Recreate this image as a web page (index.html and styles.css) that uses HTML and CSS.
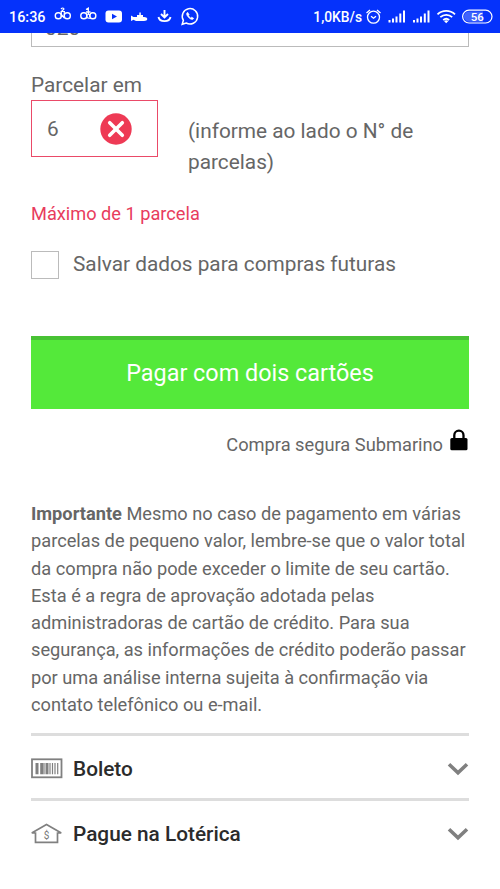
FILE: index.html
```html
<!DOCTYPE html>
<html lang="pt-BR">
<head>
<meta charset="utf-8">
<title>Pagamento</title>
<link rel="stylesheet" href="styles.css">
</head>
<body>
<header class="status">
  <span class="clock">16:36</span>
  <svg class="notices" width="150" height="33" viewBox="50 0 150 33" fill="none" stroke="#fff" stroke-width="1.4">
    <rect x="55.300" y="12.800" width="6" height="6" rx="2.800"/>
    <rect x="64.300" y="12.800" width="6" height="6" rx="2.800"/>
    <path d="M61.300 11.500V17M64.300 11.500V17M61.300 14.500l3 3.500M61 9q1.800-2 3 0l-2.500 2.500h3.500" stroke-width="1.200"/>
    <rect x="80.800" y="12.800" width="6" height="6" rx="2.800"/>
    <rect x="89.800" y="12.800" width="6" height="6" rx="2.800"/>
    <path d="M86.800 14v3.500l3 1M89.800 14v3M86 9.500l2.300-1.300V15M86 12h4.500" stroke-width="1.300"/>
    <rect x="105.500" y="10.500" width="16.500" height="12" rx="3" fill="#fff" stroke="none"/>
    <path d="m112 13.700 5 2.800-5 2.800z" fill="#0532fb" stroke="none"/>
    <path d="M131 15.500l2.500 1.500h3.500v-2h2.300v-2.500h1.500V15h2.200v2h1c2 0 3.300.7 3.300 2s-1.300 2-3.300 2h-8l-2.500-1.200-2.500 1.200z" fill="#fff" stroke="none"/>
    <path d="M164.500 10v6.500M161 14l3.500 3.500L168 14M158.500 17c1 5.500 11 5.500 12 0" stroke-width="1.900"/>
    <path d="m182.200 24.300 1.200-4A7.700 7.700 0 1 1 186.200 23z" stroke-width="1.500"/>
    <path d="M187.600 12.300c-1.500.8-1.300 2.800.8 4.900 2 2.200 4.400 3 5.300 1.200l-1.900-1.200-1.100.8c-1-.5-1.800-1.400-2.200-2.300l.6-1z" fill="#fff" stroke-width=".7"/>
  </svg>
  <span class="speed">1,0KB/s</span>
  <svg class="system" width="132" height="33" viewBox="364 0 132 33" fill="none" stroke="#fff" stroke-width="1.300">
    <circle cx="373.500" cy="17.200" r="6"/>
    <path d="m366.500 13 3.500-3M377 10l3.500 3M371 16.200l2.500 2 2.500-2"/>
    <path d="M389.500 20v2.500M393 18.500v4M396.500 16.500v6M400.300 13.500v9M404 10.500v12M414 20v2.500M417.500 18.500v4M421 16.500v6M424.800 13.500v9M428.500 10.500v12" stroke-width="2"/>
    <path d="M437.500 14.300c5-4.700 12.500-4.700 17.500 0M440.300 17.200c3.500-3.200 8.400-3.200 11.900 0M443.200 20c2-1.700 4-1.700 6 0" stroke-width="1.800"/>
    <path d="m444 21 2.200 2.300 2.200-2.300q-2.200-1.500-4.400 0z" fill="#fff" stroke="none"/>
    <rect x="462.600" y="10.200" width="29.400" height="12.800" rx="6.400" stroke-width="1.200"/>
    <path d="M471 11.500h12v10.200H469a5 5 0 0 1 0-10.200z" fill="#3f62fc" stroke="none"/>
    <text class="battery" x="477.300" y="20.800">56</text>
  </svg>
</header>
<main class="page">
  <div class="code-field"><span class="code-value">020</span></div>
  <label class="label">Parcelar em</label>
  <div class="installments">
    <div class="input-error">
      <span>6</span>
      <svg width="32" height="32" viewBox="0 0 32 32"><circle cx="16" cy="16" r="15.700" fill="#ee3a55"/><path d="m9.700 9.700 12.600 12.600M22.300 9.700 9.700 22.300" stroke="#fff" stroke-width="3.600" stroke-linecap="round"/></svg>
    </div>
    <p class="hint">(informe ao lado o N° de<br>parcelas)</p>
  </div>
  <p class="error">Máximo de 1 parcela</p>
  <div class="save"><span class="checkbox"></span><span class="save-text">Salvar dados para compras futuras</span></div>
  <button class="pay">Pagar com dois cartões</button>
  <div class="secure">
    <span>Compra segura Submarino</span>
    <svg width="18" height="22" viewBox="0 0 18 22"><rect x=".3" y="9" width="17.200" height="12.300" rx="1.500"/><path d="M4.300 10V6.200a4.600 4.600 0 0 1 9.200 0V10" fill="none" stroke="#000" stroke-width="2.300"/></svg>
  </div>
  <p class="notice"><b>Importante</b> Mesmo no caso de pagamento em várias<br>parcelas de pequeno valor, lembre-se que o valor total<br>da compra não pode exceder o limite de seu cartão.<br>Esta é a regra de aprovação adotada pelas<br>administradoras de cartão de crédito. Para sua<br>segurança, as informações de crédito poderão passar<br>por uma análise interna sujeita à confirmação via<br>contato telefônico ou e-mail.</p>
  <section class="method">
    <svg width="32" height="24" viewBox="0 0 32 24" fill="none" stroke="#808080"><rect x="1" y="2.300" width="29.500" height="18" stroke-width="1.800"/><path d="M6 6v11.300M10.700 6v11.300M16 6v11.300" stroke-width="3"/><path d="M13 6v11.300M19 6v11.300M21.500 6v11.300M24 6v11.300M26.700 6v11.300" stroke-width="1.200"/></svg>
    <span class="name">Boleto</span>
    <svg class="chevron" width="22" height="14" viewBox="0 0 22 14"><path d="m2 2.200 9 8.600 9-8.600"/></svg>
  </section>
  <section class="method">
    <svg width="32" height="24" viewBox="0 0 32 24" fill="none" stroke="#808080" stroke-width="1.700"><path d="M.7 11 15.500 2.500l14.800 8.500M.7 11h3.800v9.300h22V11h3.800"/><text class="dollar" x="15.500" y="16.500">$</text></svg>
    <span class="name">Pague na Lotérica</span>
    <svg class="chevron" width="22" height="14" viewBox="0 0 22 14"><path d="m2 2.200 9 8.600 9-8.600"/></svg>
  </section>
</main>
</body>
</html>
```
FILE: styles.css
```css
* { box-sizing: border-box; }
body { margin: 0; background: #fff; color: #666; font-family: Roboto, sans-serif; overflow: hidden; }
p { margin: 0; white-space: nowrap; }
svg { display: block; flex: none; }
.status { height: 33px; background: #0532fb; color: #fff; display: flex; align-items: center; padding: 0 4px 0 9px; font-weight: 500; white-space: nowrap; }
.clock { width: 41px; font-size: 14.400px; padding-top: 1px; }
.speed { margin-left: auto; font-size: 13.800px; margin-right: 2px; }
.battery { font-size: 11.500px; font-weight: 500; fill: #fff; stroke: none; text-anchor: middle; }
.page { padding: 0 31px; }
.code-field { height: 14px; border: 1px solid #bbb; border-top: 0; overflow: hidden; display: flex; align-items: flex-end; padding-left: 13px; }
.code-value { font-size: 21px; line-height: 24px; margin-bottom: 6px; }
.label { display: block; margin-top: 24px; height: 29px; line-height: 28px; font-size: 20.800px; }
.installments { display: flex; height: 57px; }
.input-error { width: 127px; height: 57px; border: 1px solid #ea4a68; display: flex; align-items: center; justify-content: space-between; padding: 0 25px 0 15px; font-size: 20.800px; }
.hint { margin: 16px 0 0 30px; font-size: 20.800px; line-height: 31px; }
.error { margin-top: 43px; line-height: 28px; font-size: 18.200px; color: #e83c5d; }
.save { margin-top: 23px; height: 28px; display: flex; align-items: center; gap: 14px; font-size: 20.800px; white-space: nowrap; }
.save-text { padding-bottom: 2px; }
.checkbox { width: 28px; height: 28px; border: 1px solid #bbb; }
.pay { display: block; width: 438px; height: 73px; margin: 57px 0 0; padding: 0 0 4px; border: 0; border-top: 4px solid #48c234; background: #54e93a; color: #fff; font: 23.400px Roboto, sans-serif; }
.secure { display: flex; justify-content: flex-end; gap: 7px; margin: 20px 1px 0 0; height: 32px; font-size: 18.250px; line-height: 32px; white-space: nowrap; }
.notice { margin-top: 39px; font-size: 18.230px; line-height: 27.300px; }
.method { height: 65px; padding-top: 3px; border-top: 3px solid #ddd; display: flex; align-items: center; }
.notice + .method { margin-top: 15px; }
.name { margin-left: 10px; font-size: 20.800px; font-weight: 500; color: #2b2b2b; }
.chevron { margin-left: auto; fill: none; stroke: #808080; stroke-width: 3.600; }
.dollar { font-size: 10px; fill: #777; stroke: none; text-anchor: middle; }
```
